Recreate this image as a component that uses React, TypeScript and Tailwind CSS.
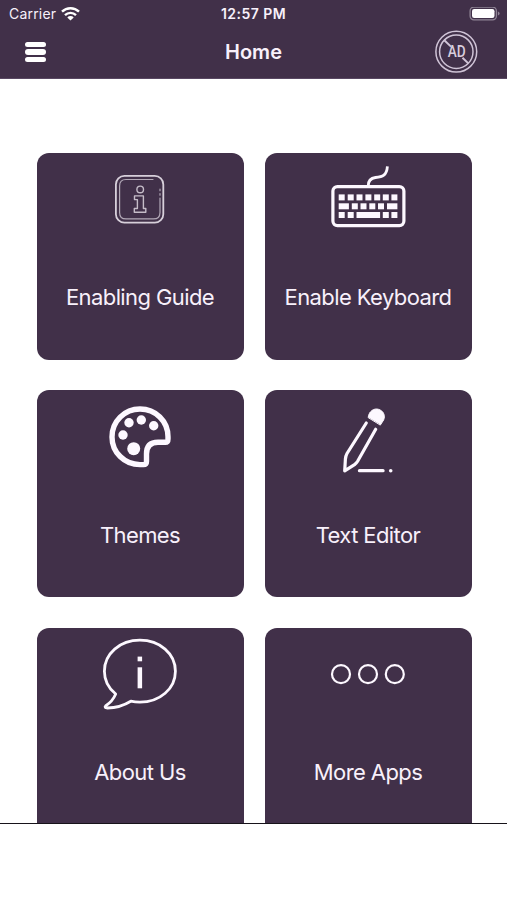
import type { ReactNode } from "react";

const tiles: { label: string; icon: ReactNode }[] = [
  { label: "Enabling Guide", icon: <GuideIcon /> },
  { label: "Enable Keyboard", icon: <KeyboardIcon /> },
  { label: "Themes", icon: <PaletteIcon /> },
  { label: "Text Editor", icon: <PencilIcon /> },
  { label: "About Us", icon: <AboutIcon /> },
  { label: "More Apps", icon: <MoreIcon /> },
];

function TileSvg({ children }: { children: ReactNode }) {
  return (
    <svg
      className="h-[90px] w-20 shrink-0 text-[#fdf8ff]"
      viewBox="0 0 80 90"
      fill="none"
      stroke="currentColor"
      strokeLinecap="round"
      strokeLinejoin="round"
    >
      {children}
    </svg>
  );
}

function GuideIcon() {
  return (
    <TileSvg>
      <rect x="15.9" y="22.9" width="47.4" height="46.8" rx="8.5" strokeWidth="1.8" opacity="0.8" />
      <g strokeWidth="1.2" opacity="0.6">
        <path d="M53 26.5H26Q19.6 26.5 19.6 32.9V59.4Q19.6 65.9 26 65.9H53.5Q60 65.9 60 59.4V45.1" />
        <path d="M60 36.1v1.6M60 40.6v1.6" />
      </g>
      <g strokeWidth="1.4" opacity="0.7">
        <circle cx="40.2" cy="36.4" r="3.3" />
        <path d="M34.5 42.9h8.9v12.6h2.4v3.7H34.3v-3.7h3.1v-8.9h-2.9z" />
      </g>
    </TileSvg>
  );
}

function KeyboardIcon() {
  return (
    <TileSvg>
      <rect x="4.9" y="33.6" width="71" height="39" rx="4.5" strokeWidth="3.2" />
      <path
        d="M40.2 33C40.2 27.5 42.5 25.1 47.5 24.5C54.5 23.8 58.8 22.5 59.4 13.4"
        strokeWidth="2.8"
        strokeLinecap="butt"
      />
      <g fill="currentColor" stroke="none">
        {[10.7, 19.7, 28.5, 37.4, 46.2, 54.8, 63.4].map((x) => (
          <rect key={x} x={x} y="41.4" width="6" height="6" />
        ))}
        <rect x="10.7" y="50.3" width="10.2" height="6" />
        {[23.8, 32.5, 41.3, 50].map((x) => (
          <rect key={x} x={x} y="50.3" width="6" height="6" />
        ))}
        <rect x="59" y="50.3" width="10.4" height="6" />
        {[10.7, 19.7, 54.8, 63.4].map((x) => (
          <rect key={x} x={x} y="59" width="6" height="6" />
        ))}
        <rect x="28.5" y="59" width="23.6" height="6" />
      </g>
    </TileSvg>
  );
}

function PaletteIcon() {
  return (
    <TileSvg>
      <path
        d="M68 49V46.8C68 31 55.5 19 40 19C24.5 19 12 31.4 12 46.9C12 62.3 24.5 74.6 40 74.6H43.5Q46.5 74.6 46.5 71.5V64Q46.5 52.3 58 52.3H65.2Q68 52.3 68 49Z"
        strokeWidth="5.4"
      />
      <g fill="currentColor" stroke="none">
        <circle cx="23" cy="45" r="4.7" />
        <circle cx="29" cy="32.7" r="4.7" />
        <circle cx="41.3" cy="30" r="4.7" />
        <circle cx="53.7" cy="35.7" r="4.7" />
        <circle cx="33.7" cy="58.7" r="6.5" />
      </g>
    </TileSvg>
  );
}

function PencilIcon() {
  return (
    <TileSvg>
      <path
        d="M40.2 27.2C41 21 46 18 50.5 19.3C55.8 21 57.5 26 55.6 30L52.5 34.8Z"
        fill="currentColor"
        strokeWidth="1"
      />
      <path
        d="M38.3 33L19 63.5Q17.7 65.8 17.4 69L16.7 80.9L26.5 74.6Q28.4 73.2 29.6 71.2L47.7 39.3"
        strokeWidth="3.2"
      />
      <path d="M31.5 80.7H55" strokeWidth="3.3" />
      <circle cx="62.7" cy="80.8" r="1.8" fill="currentColor" stroke="none" />
    </TileSvg>
  );
}

function AboutIcon() {
  return (
    <TileSvg>
      <path
        d="M15.7 66C8 59.8 4.4 52 4.4 43.2C4.4 25.6 20 12.2 39.9 12.2C59.8 12.2 75.4 25.6 75.4 43.2C75.4 60.8 59.8 74.2 39.9 74.2Q35 74.2 30.8 73.2Q20 79.8 7.5 80Q3.8 79.9 5.8 77.7Q12.5 73.5 15.7 66Z"
        strokeWidth="2.8"
      />
      <g fill="currentColor" stroke="none">
        <rect x="37.6" y="28.6" width="4.5" height="4.7" />
        <rect x="37.6" y="39.3" width="4.5" height="21" />
      </g>
    </TileSvg>
  );
}

function MoreIcon() {
  return (
    <TileSvg>
      <g strokeWidth="2.2">
        <circle cx="13" cy="46.2" r="9" />
        <circle cx="40" cy="46.2" r="9" />
        <circle cx="66.8" cy="46.2" r="9" />
      </g>
    </TileSvg>
  );
}

function StatusBar() {
  return (
    <div className="grid h-7 grid-cols-3 items-center px-[7px] text-[14px] leading-none">
      <div className="flex items-center gap-[5px] pl-0.5 tracking-[0.2px]">
        <span>Carrier</span>
        <svg className="h-[14px] w-[19px]" viewBox="0 0 19 14" fill="none" stroke="white" strokeWidth="2.4">
          <path d="M1 4.7A12.2 12.2 0 0 1 18 4.7" />
          <path d="M4 8.1A7.9 7.9 0 0 1 15 8.1" />
          <path d="M9.5 13.5L6.3 10.4A4.5 4.5 0 0 1 12.7 10.4Z" fill="white" stroke="none" />
        </svg>
      </div>
      <span className="text-center font-semibold tracking-[0.45px]">12:57 PM</span>
      <svg className="h-[15px] w-[31px] justify-self-end" viewBox="0 0 31 15" fill="none">
        <rect x="1.1" y="0.2" width="26.3" height="12.6" rx="3.8" stroke="#8f8495" strokeWidth="1.3" />
        <rect x="3" y="2.1" width="22.5" height="8.8" rx="2.2" fill="white" />
        <path d="M28.9 4.4Q30.6 4.8 30.6 6.5T28.9 8.6Z" fill="#8f8495" />
      </svg>
    </div>
  );
}

function NoAdsIcon() {
  return (
    <svg className="size-[44px]" viewBox="0 0 44 44" fill="none" stroke="#cfc3d6" strokeWidth="1.5">
      <circle cx="22.3" cy="21.7" r="20.4" />
      <circle cx="22.3" cy="21.7" r="16.7" />
      {/* the slash breaks around the letters */}
      <path d="M10.3 10.2L17 16.6M28.5 27.7L34.3 33.4" strokeWidth="2" />
      <text
        x="13.7"
        y="27"
        fill="#d8cddd"
        stroke="none"
        textLength="18"
        lengthAdjust="spacingAndGlyphs"
        className="font-['Roboto',sans-serif] text-[17px] font-medium"
      >
        AD
      </text>
    </svg>
  );
}

export default function App() {
  return (
    <div className="flex h-[900px] w-[507px] flex-col overflow-hidden bg-white font-['Inter',sans-serif] text-[#f8f0fb]">
      <header className="h-[79px] shrink-0 border-b border-[#594863] bg-[#413049]">
        <StatusBar />
        <div className="grid h-12 grid-cols-[1fr_auto_1fr] items-center px-[25px]">
          <button className="flex w-[21px] flex-col gap-[2.5px]" aria-label="Menu">
            <span className="h-[5.3px] rounded-full bg-white" />
            <span className="h-[5.3px] rounded-full bg-white" />
            <span className="h-[5.3px] rounded-full bg-white" />
          </button>
          <h1 className="text-center text-[20px] font-semibold">Home</h1>
          <button className="mr-1 justify-self-end" aria-label="Remove ads">
            <NoAdsIcon />
          </button>
        </div>
      </header>

      <main className="h-[745px] shrink-0 overflow-hidden border-b border-[#17131a] px-[36.5px] pt-[73.5px]">
        <div className="grid grid-cols-[207px_207px] gap-x-[21px] gap-y-[30.5px]">
          {tiles.map(({ label, icon }) => (
            <div key={label} className="flex h-[207px] flex-col items-center rounded-[12px] bg-[#413049]">
              {icon}
              <span className="mt-[39.9px] whitespace-nowrap text-[22px] leading-[30px] tracking-[-0.6px]">
                {label}
              </span>
            </div>
          ))}
        </div>
      </main>
    </div>
  );
}
